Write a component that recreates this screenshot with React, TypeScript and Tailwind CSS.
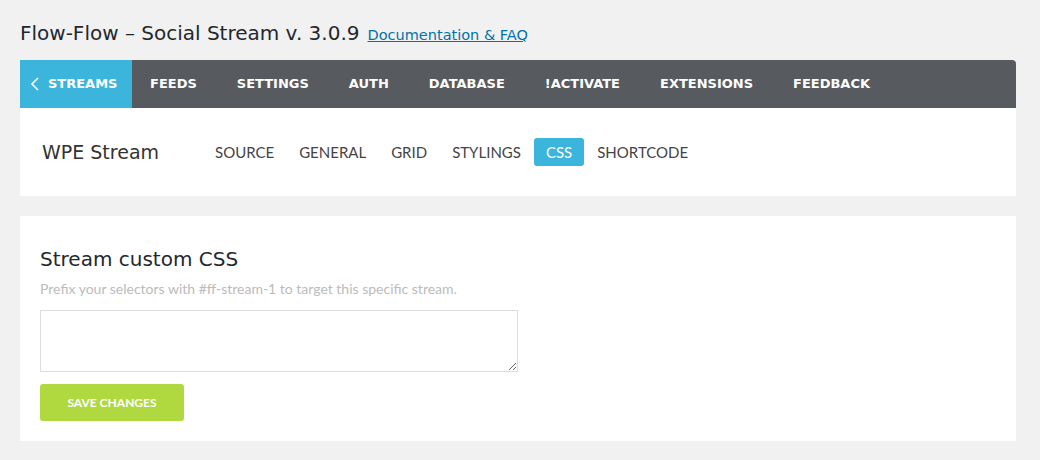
import React from "react";

const H = { fontFamily: '"DejaVu Sans", "Liberation Sans", sans-serif' };
const L = { fontFamily: 'Lato, "Liberation Sans", sans-serif' };

export default function App() {
  const nav = ["FEEDS", "SETTINGS", "AUTH", "DATABASE", "!ACTIVATE", "EXTENSIONS", "FEEDBACK"];
  const sub = ["SOURCE", "GENERAL", "GRID", "STYLINGS", "CSS", "SHORTCODE"];
  return (
    <div className="w-[1040px] h-[460px] bg-[#f1f1f1] px-5 pt-[18px]" style={L}>
      <div className="flex items-baseline gap-2 h-[27px]">
        <h1 className="text-[20px] text-[#23282d]" style={H}>Flow-Flow – Social Stream v. 3.0.9</h1>
        <a className="text-[14.5px] text-[#0073aa] underline" style={H}>Documentation &amp; FAQ</a>
      </div>
      <div className="mt-[15px] w-[996px]">
        <div className="flex h-12 bg-[#575a5f] rounded-tr-[4px] text-white text-[13px] font-bold" style={H}>
          <div className="flex items-center bg-[#3bb5dc] w-[112px] pl-[10px] gap-[8px]">
            <svg width="10" height="16" viewBox="0 0 10 16" fill="none" stroke="white" strokeWidth="1.6">
              <path d="M8 2 L2 8 L8 14" />
            </svg>
            <span>STREAMS</span>
          </div>
          <div className="flex items-center pl-[18px] gap-[40px]">
            {nav.map((n) => (
              <span key={n}>{n}</span>
            ))}
          </div>
        </div>
        <div className="bg-white h-[88px] flex items-center pl-[22px]">
          <div className="text-[19px] text-[#333] w-[161px]" style={H}>WPE Stream</div>
          <div className="flex items-center gap-[1px] text-[15px] text-[#444]">
            {sub.map((s) =>
              s === "CSS" ? (
                <span key={s} className="bg-[#3bb5dc] text-white rounded-[3px] px-[12px] h-[28px] flex items-center">{s}</span>
              ) : (
                <span key={s} className="px-[12px]">{s}</span>
              )
            )}
          </div>
        </div>
        <div className="bg-white mt-5 h-[225px] px-5 pt-[28px]">
          <h2 className="text-[20px] text-[#23282d]" style={H}>Stream custom CSS</h2>
          <p className="text-[14px] text-[#bbbbbb] mt-[4px]">Prefix your selectors with #ff-stream-1 to target this specific stream.</p>
          <textarea className="block mt-[11px] w-[478px] h-[62px] border border-[#dddddd] resize-y outline-none" />
          <button className="mt-3 w-[144px] h-[37px] bg-[#b0d93f] text-white text-[12px] font-bold rounded-[3px]">SAVE CHANGES</button>
        </div>
      </div>
    </div>
  );
}
